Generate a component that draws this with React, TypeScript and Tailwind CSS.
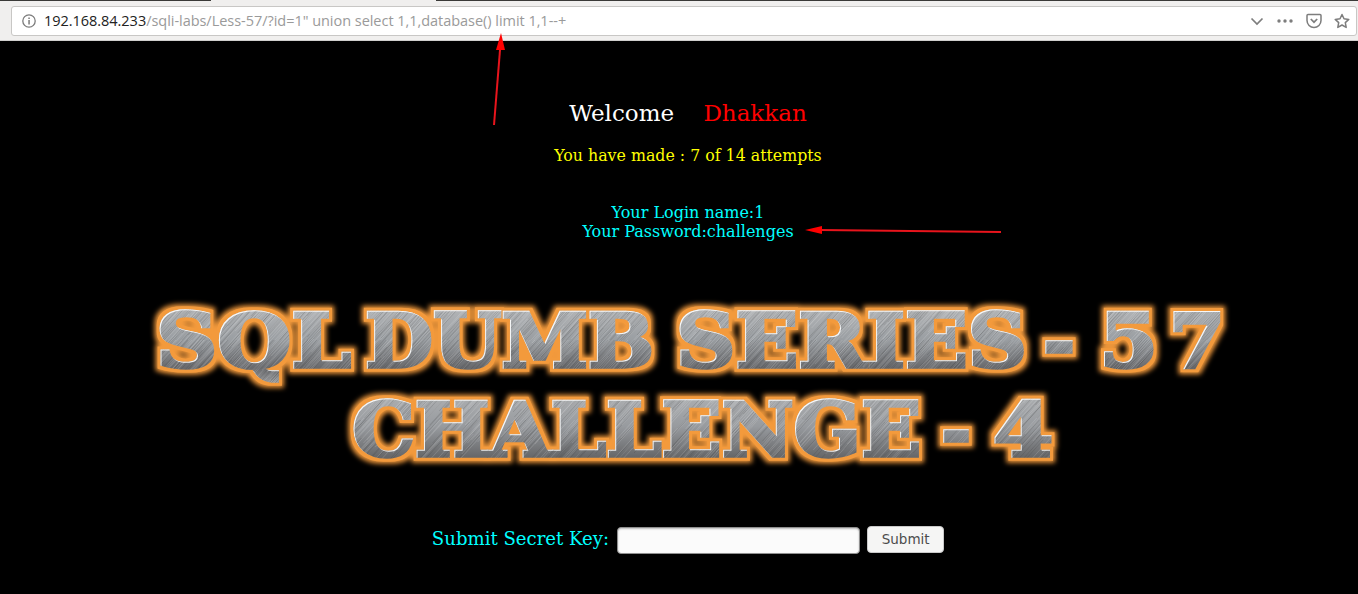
const WORDS = [
  { x: 156, y: 77, w: 195, t: "SQL" },
  { x: 365, y: 77, w: 289, t: "DUMB" },
  { x: 676, y: 77, w: 351, t: "SERIES" },
  { x: 1043, y: 77, w: 32, t: "-" },
  { x: 1099, y: 77, w: 59, t: "5" },
  { x: 1169, y: 77, w: 56, t: "7" },
  { x: 352, y: 166, w: 569, t: "CHALLENGE" },
  { x: 941, y: 166, w: 30, t: "-" },
  { x: 993, y: 166, w: 60, t: "4" },
];

function streaks(seed: number, step: number) {
  let d = "";
  let s = seed;
  for (let x = -180; x < 1358; x += step) {
    s = (s * 9301 + 49297) % 233280;
    const j = (s / 233280) * step;
    const y0 = Math.floor((s % 200));
    const len = 30 + (s % 120);
    const px = x + j + (200 - y0) * 0.9;
    d += `M${px.toFixed(1)} ${y0}l${(len * 0.9).toFixed(1)} ${-len}`;
  }
  return d;
}
const DARK = streaks(17, 1.4);
const LIGHT = streaks(91, 1.3);

export default function App() {
  return (
    <div className={`relative w-[1358px] h-[594px] overflow-hidden bg-black font-["DejaVu_Serif",serif]`}>
      {/* browser bar */}
      <div className="relative h-[41px] bg-[#f0efee] border-b border-[#d0cfcd] pt-[6px] px-[11px]">
        <div className="absolute left-0 top-0 w-[211px] h-px bg-[#3a3a38]" />
        <div className="absolute left-[436px] right-0 top-0 h-px bg-[#3a3a38]" />
        <div className="flex items-center h-[30px] w-[1346px] bg-white border border-[#c8c7c5] rounded-[3px] pl-[9px] pr-[6px]">
          <svg width="16" height="16" viewBox="0 0 16 16" fill="none" className="shrink-0">
            <circle cx="8" cy="8" r="6.2" stroke="#7b7b7b" strokeWidth="1.3" />
            <rect x="7.3" y="7" width="1.5" height="4.5" fill="#7b7b7b" />
            <rect x="7.3" y="4.5" width="1.5" height="1.5" fill="#7b7b7b" />
          </svg>
          <div className="ml-[7px] font-['Open_Sans',sans-serif] text-[14.5px] tracking-[-0.035px] text-[#9a9a9a] whitespace-pre">
            <span className="text-[#222]">192.168.84.233</span>/sqli-labs/Less-57/?id=1" union select 1,1,database() limit 1,1--+
          </div>
          <div className="ml-auto flex items-center">
            <svg width="16" height="16" viewBox="0 0 16 16" fill="none" className="mr-[12px]">
              <path d="M2.5 5.5 L8 11 L13.5 5.5" stroke="#7d7d7d" strokeWidth="1.7" />
            </svg>
            <svg width="16" height="6" viewBox="0 0 16 6" className="mr-[13px]">
              <circle cx="2" cy="3" r="1.7" fill="#7d7d7d" />
              <circle cx="8" cy="3" r="1.7" fill="#7d7d7d" />
              <circle cx="14" cy="3" r="1.7" fill="#7d7d7d" />
            </svg>
            <svg width="16" height="16" viewBox="0 0 16 16" fill="none" className="mr-[12px]">
              <path d="M1 2.5 Q1 1.5 2 1.5 H14 Q15 1.5 15 2.5 V7.5 A7 7 0 0 1 1 7.5 Z" stroke="#7d7d7d" strokeWidth="1.5" />
              <path d="M4.8 6 L8 9.2 L11.2 6" stroke="#7d7d7d" strokeWidth="1.7" />
            </svg>
            <svg width="16" height="16" viewBox="0 0 16 16" fill="none">
              <path d="M8 1.5 L10 5.8 L14.8 6.4 L11.3 9.6 L12.2 14.4 L8 12 L3.8 14.4 L4.7 9.6 L1.2 6.4 L6 5.8 Z" stroke="#7d7d7d" strokeWidth="1.5" strokeLinejoin="round" />
            </svg>
          </div>
        </div>
      </div>

      {/* page */}
      <div className="flex flex-col items-center pl-[18px]">
        <div className="mt-[58px] text-[23px] leading-[28px] whitespace-pre text-white">
          Welcome{"    "}<span className="text-[#ff0000]">Dhakkan</span>
        </div>
        <div className="mt-[19px] text-[15.8px] leading-[20px] text-[#ffff00]">You have made : 7 of 14 attempts</div>
        <div className="mt-[37px] text-[16px] leading-[19px] text-[#00ffff] text-center">
          <div>Your Login name:1</div>
          <div>Your Password:challenges</div>
        </div>
        <svg width="1358" height="200" viewBox="0 0 1358 200" className="mt-[49px] -ml-[18px] block shrink-0">
          <defs>
            <linearGradient id="band" x1="0" y1="0" x2="0" y2="200" gradientUnits="userSpaceOnUse">
              <stop offset="0.08" stopColor="#b4b6b8" />
              <stop offset="0.25" stopColor="#9a9ea2" />
              <stop offset="0.39" stopColor="#68696c" />
              <stop offset="0.5" stopColor="#b0b2b4" />
              <stop offset="0.68" stopColor="#989b9f" />
              <stop offset="0.84" stopColor="#656668" />
            </linearGradient>
            <pattern id="metal" width="1358" height="200" patternUnits="userSpaceOnUse">
              <rect width="1358" height="200" fill="url(#band)" />
              <path d={DARK} stroke="#2a2a2a" strokeOpacity="0.22" strokeWidth="0.7" fill="none" />
              <path d={LIGHT} stroke="#fff" strokeOpacity="0.2" strokeWidth="0.7" fill="none" />
            </pattern>
            <filter id="sign" filterUnits="userSpaceOnUse" x="0" y="0" width="1358" height="200" colorInterpolationFilters="sRGB">
              <feMorphology in="SourceAlpha" operator="dilate" radius="4.5" result="wide" />
              <feFlood floodColor="#f39a3c" result="orange" />
              <feComposite in="orange" in2="wide" operator="in" result="ring" />
              <feGaussianBlur in="ring" stdDeviation="2.4" result="glow" />
              <feMorphology in="SourceAlpha" operator="dilate" radius="2.8" result="mid" />
              <feComposite in="orange" in2="mid" operator="in" result="solid" />
              <feOffset in="SourceAlpha" dx="1" dy="1" result="shifted" />
              <feComposite in="SourceAlpha" in2="shifted" operator="out" result="edge" />
              <feFlood floodColor="#ffffff" floodOpacity="0.9" />
              <feComposite in2="edge" operator="in" result="white" />
              <feMerge>
                <feMergeNode in="glow" />
                <feMergeNode in="solid" />
                <feMergeNode in="SourceGraphic" />
                <feMergeNode in="white" />
              </feMerge>
            </filter>
          </defs>
          <g filter="url(#sign)" fontFamily="'DejaVu Serif',serif" fontWeight="700" fontSize="75" fill="url(#metal)" stroke="url(#metal)" strokeWidth="3.5">
            {WORDS.map((l) => (
              <text key={l.x + l.t} x={l.x} y={l.y} textLength={l.w} lengthAdjust="spacingAndGlyphs">{l.t}</text>
            ))}
          </g>
        </svg>
        <div className="mt-[36px] flex items-center">
          <span className="mb-[3px] text-[18.1px] leading-[26px] text-[#00ffff]">Submit Secret Key:</span>
          <div className="ml-[8px] w-[243px] h-[27px] rounded-[4px] bg-[#fbfbfb] border border-[#8f8f8f] shadow-[inset_0_1px_2px_rgba(0,0,0,0.25)]" />
          <div className="ml-[7px] mb-[2px] w-[77px] h-[27px] rounded-[4px] bg-[#f5f5f4] border border-[#c9c9c9] flex items-center justify-center font-['DejaVu_Sans',sans-serif] text-[13.5px] text-[#4c4c4c]">Submit</div>
        </div>
      </div>

      {/* annotation arrows */}
      <svg className="absolute left-0 top-0 pointer-events-none" width="1358" height="594" viewBox="0 0 1358 594" fill="none">
        <path d="M494 125 L500 50" stroke="#e8141c" strokeWidth="2" />
        <path d="M501 33 L496 50 L505 50 Z" fill="#ff0000" />
        <path d="M1001 232 L820 230" stroke="#e8141c" strokeWidth="2" />
        <path d="M805 230 L822 226 L822 234 Z" fill="#ff0000" />
      </svg>
    </div>
  );
}
